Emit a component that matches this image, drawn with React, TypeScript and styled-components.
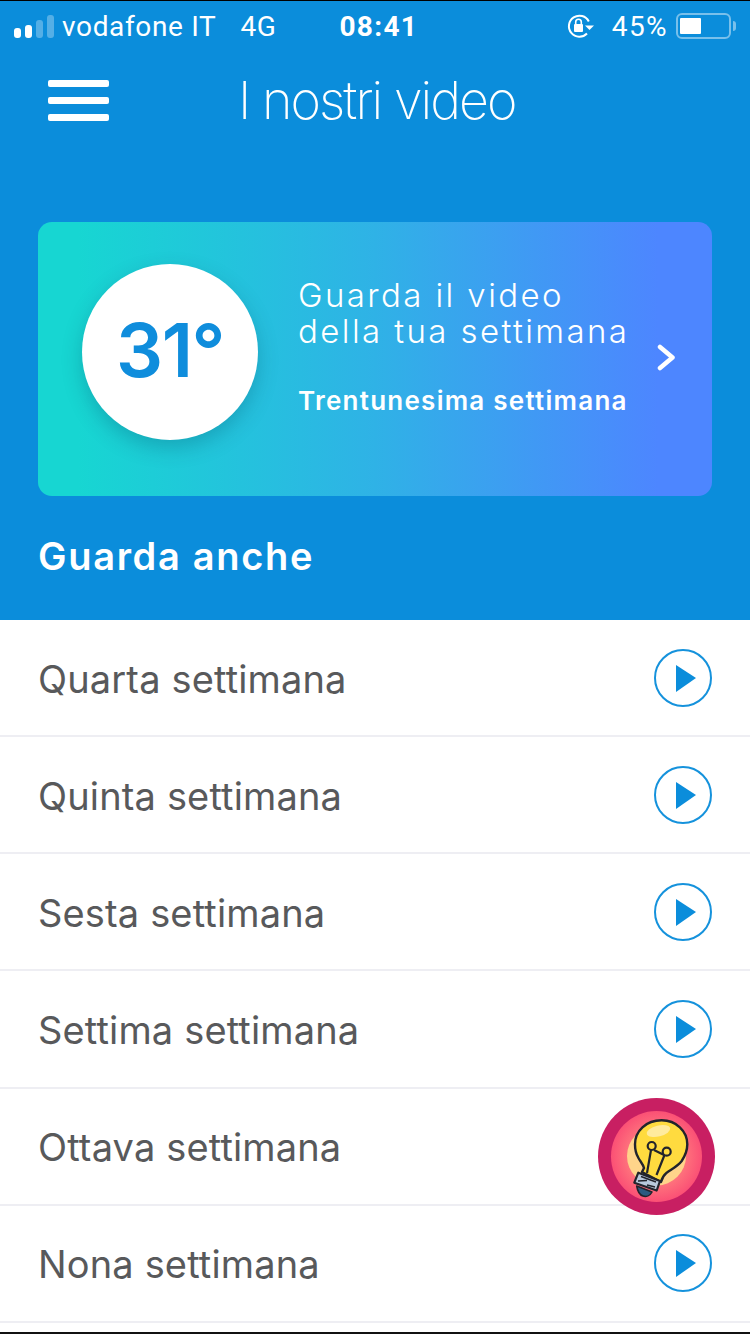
import React from "react";
import styled, { createGlobalStyle } from "styled-components";

const Global = createGlobalStyle`
  html, body { margin: 0; padding: 0; background: #fff; }
  body { font-family: Inter, "Liberation Sans", sans-serif; }
`;

const Screen = styled.div`
  position: relative;
  width: 750px;
  height: 1334px;
  overflow: hidden;
  display: flex;
  flex-direction: column;
  background: #fff;
  border-top: 1px solid #000;
  border-bottom: 2px solid #111;
  box-sizing: border-box;
`;

const Header = styled.header`
  height: 619px;
  flex: none;
  background: #0b8ddb;
  display: flex;
  flex-direction: column;
  color: #fff;
`;

const StatusBar = styled.div`
  height: 50px;
  display: flex;
  align-items: center;
  padding: 0 14px;
  font-family: Roboto, Inter, sans-serif;
  font-size: 28px;
  letter-spacing: 0.65px;
`;

const Signal = styled.div`
  display: flex;
  align-items: flex-end;
  gap: 4px;
  height: 23px;
  margin-right: 8px;
`;

const SignalBar = styled.span<{ $h: number; $dim?: boolean }>`
  width: 7px;
  height: ${(p) => p.$h}px;
  border-radius: 3px;
  background: ${(p) => (p.$dim ? "rgba(255,255,255,0.3)" : "#fff")};
`;

const Carrier = styled.span`
  margin-right: 24px;
`;

const Time = styled.span`
  font-weight: 700;
  margin-left: 63px;
  letter-spacing: 1.3px;
`;

const StatusRight = styled.div`
  margin-left: auto;
  display: flex;
  align-items: center;
`;

const Percent = styled.span`
  margin: 0 8px 0 18px;
  letter-spacing: 1.4px;
`;

const Battery = styled.div`
  width: 55px;
  height: 26px;
  box-sizing: border-box;
  border: 2px solid rgba(255,255,255,0.45);
  border-radius: 6px;
  padding: 3px 2px;
  margin-right: 5px;
  position: relative;
  &::before {
    content: "";
    display: block;
    width: 21px;
    height: 16px;
    background: #fff;
    border-radius: 1px;
  }
  &::after {
    content: "";
    position: absolute;
    right: -7px;
    top: 6px;
    width: 3px;
    height: 10px;
    border-radius: 0 3px 3px 0;
    background: rgba(255,255,255,0.45);
  }
`;

const NavBar = styled.nav`
  display: flex;
  align-items: center;
  height: 98px;
  padding-left: 48px;
`;

const Burger = styled.div`
  width: 61px;
  display: flex;
  flex-direction: column;
  gap: 10px;
`;

const BurgerLine = styled.span`
  height: 7px;
  background: #fff;
  border-radius: 2px;
`;

const Title = styled.h1`
  margin: 0 0 0 129px;
  font-family: Inter, sans-serif;
  font-weight: 200;
  font-size: 52px;
  letter-spacing: -1.95px;
  white-space: nowrap;
`;

const Card = styled.section`
  margin: 73px 38px 0;
  height: 274px;
  flex: none;
  box-sizing: border-box;
  border-radius: 14px;
  background: linear-gradient(90deg, #17d6d2 6%, #2fb2e6 50%, #4d86ff 92%);
  display: flex;
  align-items: center;
  padding: 0 0 14px 44px;
  position: relative;
`;

const Badge = styled.div`
  width: 176px;
  height: 176px;
  flex: none;
  border-radius: 50%;
  background: #fff;
  box-shadow: 0 8px 20px rgba(0, 60, 90, 0.25);
  display: flex;
  align-items: center;
  justify-content: center;
  color: #0f8ddc;
  font-family: Inter, sans-serif;
  font-size: 74px;
  font-weight: 600;
  letter-spacing: -1.5px;
  padding-bottom: 4px;
  box-sizing: border-box;
`;

const CardText = styled.div`
  margin-left: 40px;
  display: flex;
  flex-direction: column;
  padding-bottom: 11px;
`;

const CardHeadline = styled.div`
  font-family: Inter, sans-serif;
  font-weight: 300;
  font-size: 33px;
  line-height: 36px;
  letter-spacing: 2.4px;
  color: #fff;
  white-space: nowrap;
`;

const CardSub = styled.div`
  margin-top: 36px;
  font-family: Inter, sans-serif;
  font-weight: 600;
  font-size: 26px;
  letter-spacing: 1.25px;
  color: #fff;
  white-space: nowrap;
`;

const Chevron = styled.svg`
  position: absolute;
  right: 35px;
  top: 122px;
`;

const SectionTitle = styled.h2`
  margin: 38px 0 0 38px;
  font-family: Inter, sans-serif;
  font-weight: 600;
  font-size: 38px;
  line-height: 44px;
  letter-spacing: 1.7px;
`;

const List = styled.ul`
  list-style: none;
  margin: 0;
  padding: 0;
`;

const Row = styled.li`
  height: 115.15px;
  border-bottom: 2px solid #eeeef3;
  display: flex;
  align-items: center;
  justify-content: space-between;
  padding: 0 38px;
`;

const RowLabel = styled.span`
  font-family: Inter, Roboto, sans-serif;
  font-size: 38px;
  letter-spacing: 0.15px;
  color: #58595b;
  padding-top: 2px;
`;

const FloatButton = styled.div`
  position: absolute;
  left: 598px;
  top: 1097px;
`;

const PlayIcon = () => (
  <svg width="58" height="58" viewBox="0 0 58 58">
    <circle cx="29" cy="29" r="28" fill="none" stroke="#1592dc" strokeWidth="2" />
    <path d="M22 16 L42 29 L22 43 Z" fill="#0b8ddb" />
  </svg>
);

const Lightbulb = () => (
  <svg width="117" height="117" viewBox="0 0 117 117">
    <defs>
      <radialGradient id="inner" cx="50%" cy="50%" r="50%">
        <stop offset="50%" stopColor="#ff7f7f" />
        <stop offset="100%" stopColor="#fb5075" />
      </radialGradient>
    </defs>
    <circle cx="58.5" cy="58.5" r="58.5" fill="#c81f62" />
    <circle cx="58.5" cy="58.5" r="45.5" fill="url(#inner)" />
    <circle cx="58.5" cy="58" r="29.5" fill="#ffd48a" />
    <path d="M63.7 22.3 C48 22.3 37 33 37 46.3 C37 52 38 56 40.3 59.7 C42 63 45 66 46 70 L44 74 L63 84 C64 80 66 77 68.7 74.7 C74 71 80 68 83.7 63 C87 58 89.3 53 89.3 46.3 C89.3 33 78 22.3 63.7 22.3 Z" fill="#ffdb3f" stroke="#22242c" strokeWidth="2.4" strokeLinejoin="round" />
    <ellipse cx="60.5" cy="33" rx="12" ry="5.5" fill="#ffeb9e" transform="rotate(-14 60.5 33)" />
    <path d="M53 52 L49 75 M56 52 L66 57 M66.5 57 L58.5 77" fill="none" stroke="#22242c" strokeWidth="2.2" />
    <circle cx="53.7" cy="48" r="4" fill="#ffdb3f" stroke="#22242c" strokeWidth="2.2" />
    <circle cx="68.7" cy="53.7" r="4" fill="#ffdb3f" stroke="#22242c" strokeWidth="2.2" />
    <path d="M38.7 88 L54 94 C52 98 48 99 45 98 C42 97 39.5 93 38.7 88 Z" fill="#2e5a80" stroke="#22242c" strokeWidth="1.6" strokeLinejoin="round" />
    <path d="M40.3 74.7 L62 83 L58.7 92.5 L36.3 84.7 Z" fill="#b9c9dc" stroke="#22242c" strokeWidth="2.2" strokeLinejoin="round" />
    <path d="M43 78.5 L58 84 M40 83 L49 82.5 M49 87 L57 89" stroke="#22242c" strokeWidth="1.5" />
  </svg>
);

const LockIcon = () => (
  <svg width="27" height="26" viewBox="0 0 27 26" fill="none">
    <path d="M20 20.5 A10.5 10.5 0 1 1 21.8 8.5" stroke="#fff" strokeWidth="2" />
    <path d="M18 12.5 H27 L22.5 17 Z" fill="#fff" />
    <rect x="7" y="11" width="9" height="8" rx="1" fill="#fff" />
    <path d="M8.7 11 V9 A2.8 2.8 0 0 1 14.3 9 V11" stroke="#fff" strokeWidth="1.6" />
  </svg>
);

const weeks = ["Quarta", "Quinta", "Sesta", "Settima", "Ottava", "Nona"];

export default function App() {
  return (
    <>
      <Global />
      <Screen>
        <Header>
          <StatusBar>
            <Signal>
              <SignalBar $h={10} />
              <SignalBar $h={13} />
              <SignalBar $h={18} $dim />
              <SignalBar $h={23} $dim />
            </Signal>
            <Carrier>vodafone IT</Carrier>
            <span>4G</span>
            <Time>08:41</Time>
            <StatusRight>
              <LockIcon />
              <Percent>45%</Percent>
              <Battery />
            </StatusRight>
          </StatusBar>
          <NavBar>
            <Burger>
              <BurgerLine />
              <BurgerLine />
              <BurgerLine />
            </Burger>
            <Title>I nostri video</Title>
          </NavBar>
          <Card>
            <Badge>31°</Badge>
            <CardText>
              <CardHeadline>
                Guarda il video
                <br />
                della tua settimana
              </CardHeadline>
              <CardSub>Trentunesima settimana</CardSub>
            </CardText>
            <Chevron width="20" height="28" viewBox="0 0 20 28" fill="none">
              <path d="M3 3 L15.5 13.5 L3 24" stroke="#fff" strokeWidth="4.5" strokeLinecap="round" strokeLinejoin="round" />
            </Chevron>
          </Card>
          <SectionTitle>Guarda anche</SectionTitle>
        </Header>
        <List>
          {weeks.map((w) => (
            <Row key={w}>
              <RowLabel>{w} settimana</RowLabel>
              <PlayIcon />
            </Row>
          ))}
        </List>
        <FloatButton>
          <Lightbulb />
        </FloatButton>
      </Screen>
    </>
  );
}
